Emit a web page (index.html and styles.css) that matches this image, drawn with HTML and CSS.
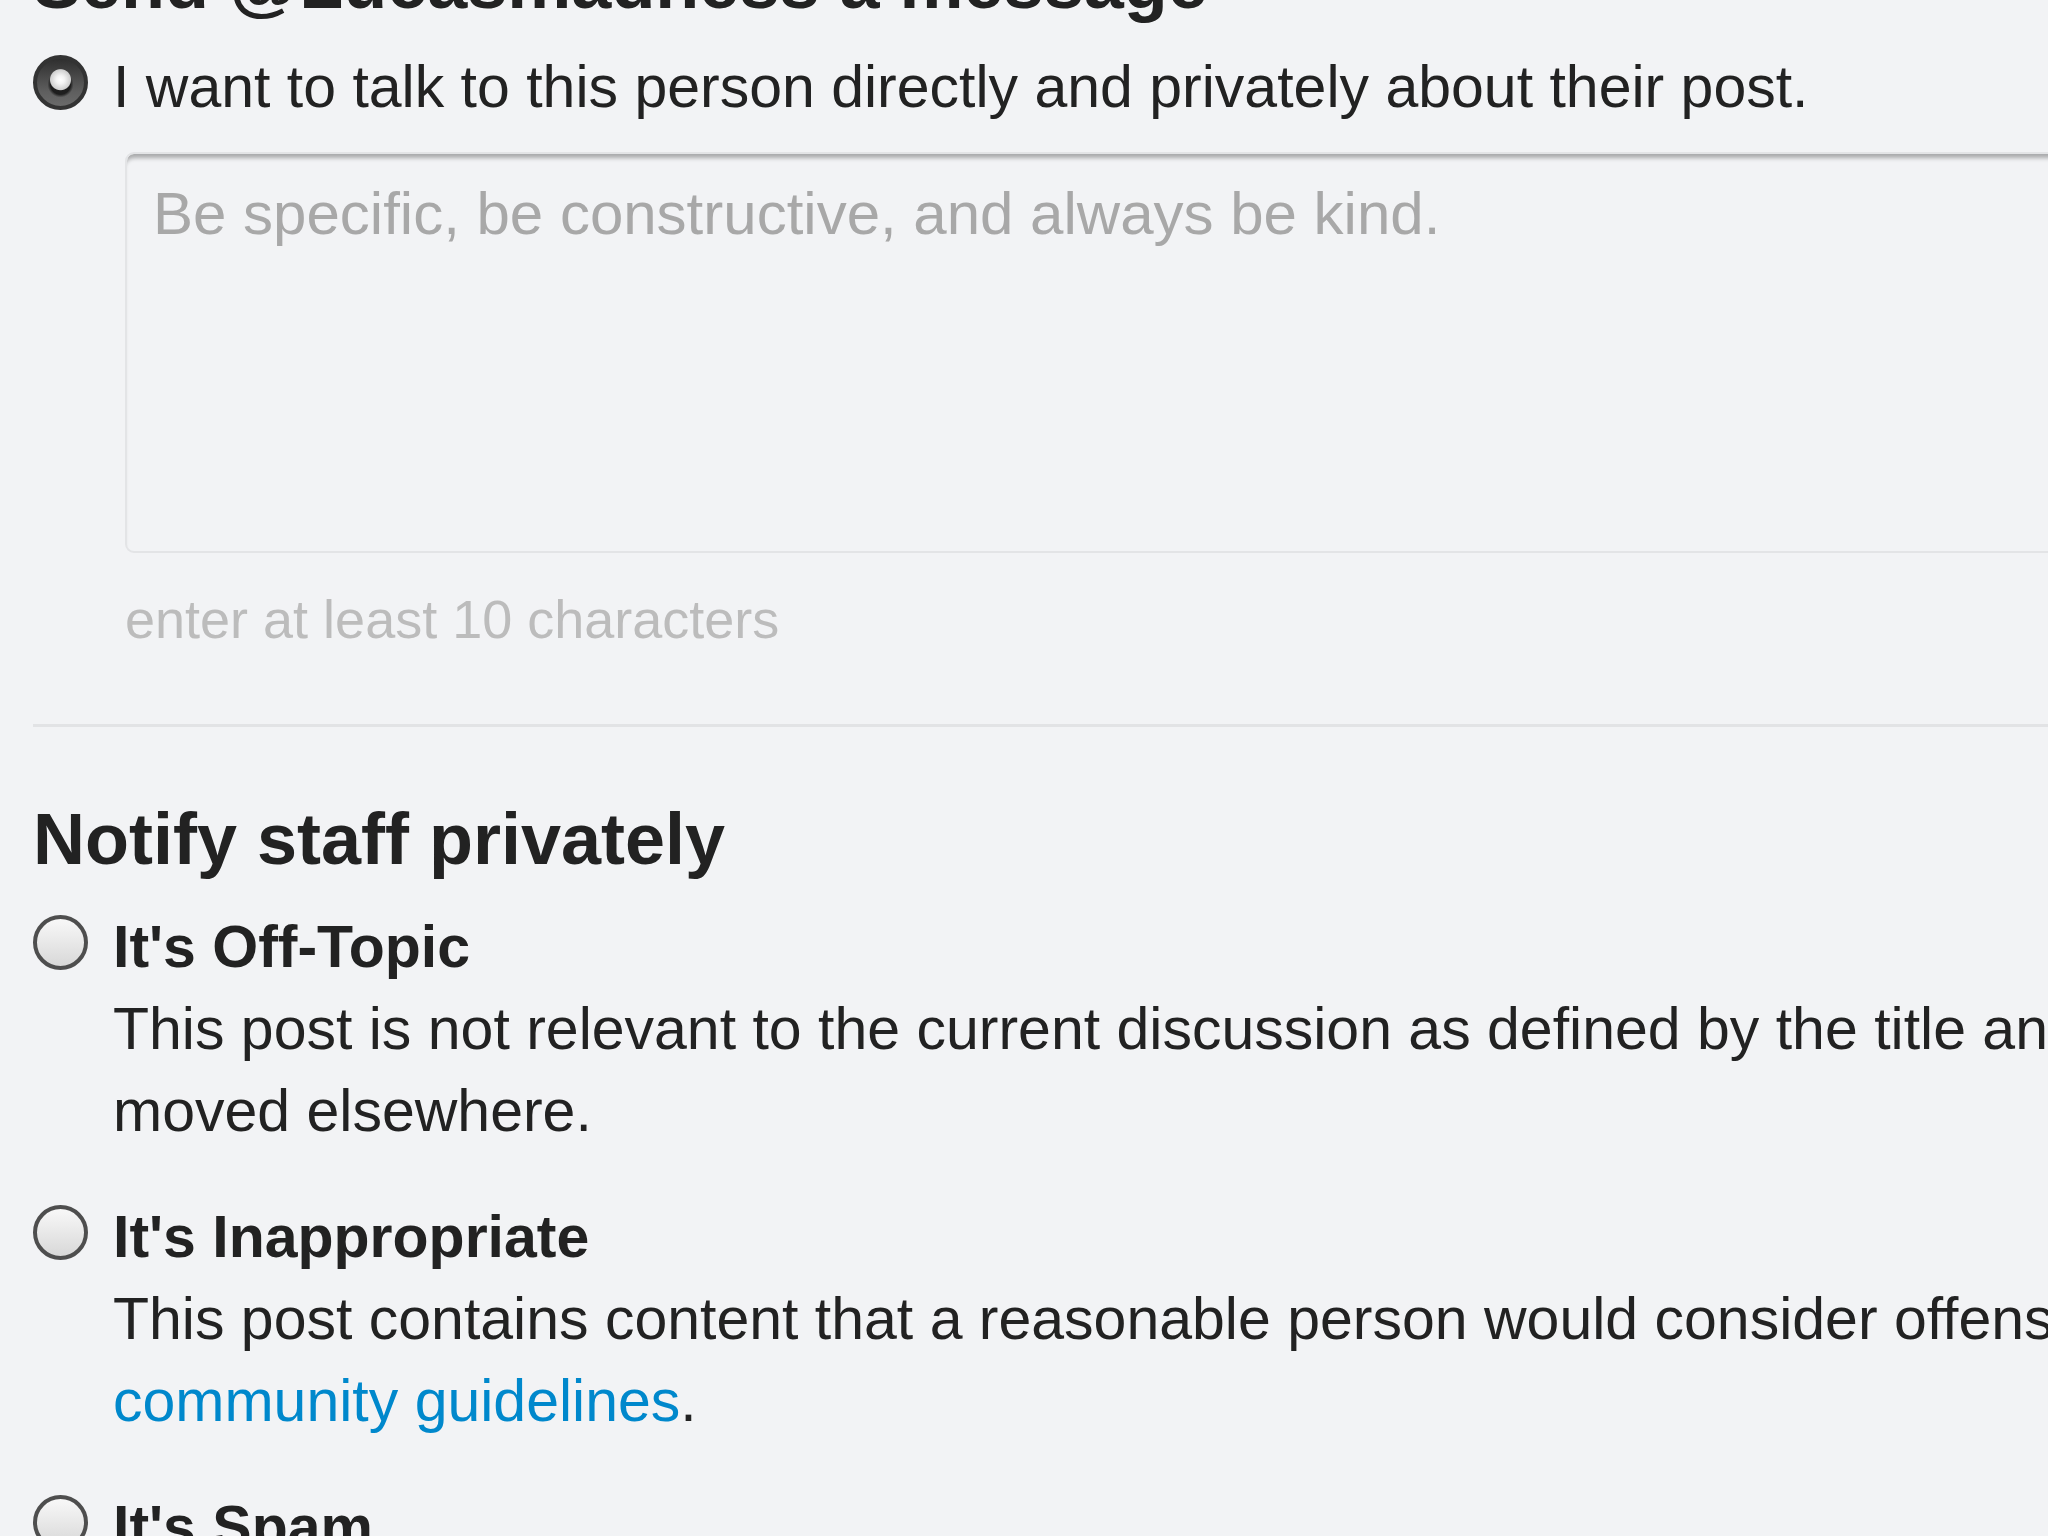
FILE: index.html
```html
<!DOCTYPE html>
<html lang="en">
<head>
<meta charset="utf-8">
<title>Flag post</title>
<link rel="stylesheet" href="styles.css">
</head>
<body>
<div class="modal">
  <h2 class="title">Send @Lucasmadness a message</h2>

  <label class="option">
    <input type="radio" name="flag" class="radio" checked>
    <span class="option-body">
      <span class="option-text">I want to talk to this person directly and privately about their post.</span>
    </span>
  </label>

  <div class="message">
    <textarea class="message-input" placeholder="Be specific, be constructive, and always be kind."></textarea>
    <div class="hint">enter at least 10 characters</div>
  </div>

  <hr class="divider">

  <h2 class="section-title">Notify staff privately</h2>

  <label class="option">
    <input type="radio" name="flag" class="radio">
    <span class="option-body">
      <span class="option-title">It's Off-Topic</span>
      <span class="option-desc">This post is not relevant to the current discussion as defined by the title and first post, and should probably be<br>moved elsewhere.</span>
    </span>
  </label>

  <label class="option">
    <input type="radio" name="flag" class="radio">
    <span class="option-body">
      <span class="option-title">It's Inappropriate</span>
      <span class="option-desc">This post contains content that a reasonable person would consider offensive, abusive, or a violation of our<br><a href="#" class="link">community guidelines</a>.</span>
    </span>
  </label>

  <label class="option">
    <input type="radio" name="flag" class="radio">
    <span class="option-body">
      <span class="option-title">It's Spam</span>
      <span class="option-desc">This post is an advertisement. It is not useful or relevant to the current topic, but promotional in nature.</span>
    </span>
  </label>
</div>
</body>
</html>
```

FILE: styles.css
```css
html, body {
  margin: 0;
  padding: 0;
  background: #f2f3f5;
  overflow: hidden;
}

body {
  font-family: "Liberation Sans", Arial, Helvetica, sans-serif;
  color: #222222;
  font-size: 59px;
  line-height: 82px;
}

.modal {
  width: 2600px;
  padding-left: 33px;
  box-sizing: border-box;
}

.title,
.section-title {
  margin: 0;
  font-size: 72px;
  line-height: 86px;
  font-weight: bold;
  white-space: nowrap;
}

.title {
  margin-top: -60px;
}

.option {
  display: flex;
  align-items: flex-start;
  gap: 25px;
  cursor: pointer;
}

.title + .option {
  margin-top: 20px;
}

.option-body {
  display: flex;
  flex-direction: column;
  white-space: nowrap;
}

.option-title {
  font-weight: bold;
}

.radio {
  appearance: none;
  -webkit-appearance: none;
  flex: none;
  width: 55px;
  height: 55px;
  margin: 9px 0 0;
  box-sizing: border-box;
  border-radius: 50%;
  border: 4px solid #4e4e4e;
  background: linear-gradient(#f8f8f8, #d8d8d8);
}

.radio:checked {
  border-color: #333333;
  background:
    radial-gradient(circle at 50% 44%, #ffffff 0, #f4f4f4 4px, #cfcfcf 10px, rgba(0,0,0,0) 11px),
    radial-gradient(circle at 50% 54%, #1e1e1e 0, #1e1e1e 10px, rgba(30,30,30,0) 13px),
    linear-gradient(#2f2f2f, #5f5f5f 70%, #6a6a6a);
}

.message {
  margin: 24px 0 0 92px;
}

.message-input {
  display: block;
  width: 2400px;
  height: 401px;
  box-sizing: border-box;
  margin: 0;
  padding: 24px 26px;
  border: 2px solid #e3e4e6;
  border-radius: 9px;
  background: transparent;
  box-shadow: inset 0 7px 4px -3px rgba(0, 0, 0, 0.3);
  font-family: "Liberation Sans", Arial, Helvetica, sans-serif;
  font-size: 60px;
  line-height: 72px;
  color: #222222;
  resize: none;
  outline: none;
}

.message-input::placeholder {
  color: #a8a8a8;
  opacity: 1;
}

.hint {
  margin-top: 28px;
  font-size: 54px;
  line-height: 76px;
  color: #bcbcbc;
}

.divider {
  margin: 67px 0 0;
  border: 0;
  border-top: 3px solid #e2e3e5;
  height: 0;
}

.section-title {
  margin-top: 69px;
}

.section-title + .option {
  margin-top: 24px;
}

.section-title ~ .option + .option {
  margin-top: 44px;
}

.link {
  color: #0088cc;
  text-decoration: none;
}
```
